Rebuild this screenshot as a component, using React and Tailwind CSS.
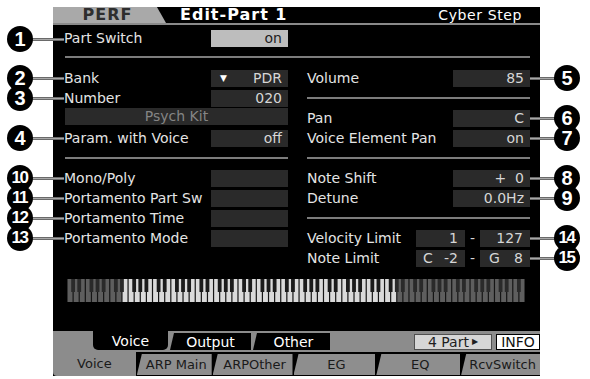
import React from "react";

const LBL = "text-[14px] leading-[17px] text-[#e4e4e4] whitespace-nowrap";
const BOXB = "h-[17px] bg-[#2a2a2a] text-[14px] leading-[17px] whitespace-nowrap";
const BOX = `${BOXB} text-[#d6d6d6]`;

function Row({ label, value, children }) {
  return (
    <div className="flex h-[20px] items-start justify-between">
      <span className={LBL}>{label}</span>
      {children ? children : <div className={`${BOX} w-[77px] text-right pr-[6px]`}>{value}</div>}
    </div>
  );
}

function Sep({ ml = "" }) {
  return (
    <div className="h-[20px]">
      <div className={`mt-[7px] h-[2px] bg-[#7c7c7c] ${ml}`} />
    </div>
  );
}

function Keyboard() {
  const W = 458;
  const n = 75;
  const w = W / n;
  const whites = [];
  const blacks = [];
  for (let i = 0; i < n; i++) {
    const dim = i < 9 || i >= 54;
    whites.push(
      <rect key={"w" + i} x={i * w + 0.6} y={0} width={w - 1.2} height={23} fill={dim ? "#5e5e5e" : "#dadada"} />
    );
  }
  for (let i = 0; i < n - 1; i++) {
    const p = i % 7;
    if ([0, 1, 3, 4, 5].includes(p)) {
      const dim = i < 9 || i >= 53;
      blacks.push(
        <rect key={"b" + i} x={(i + 1) * w - 1.9} y={0} width={3.8} height={13} fill={dim ? "#2a2a2a" : "#1b1b1b"} />
      );
    }
  }
  return (
    <svg width={W} height={23} viewBox={`0 0 ${W} 23`} className="block">
      <rect x="0" y="0" width={W} height="23" fill="#151515" />
      {whites}
      {blacks}
    </svg>
  );
}

function Callout({ n, y, side }) {
  const two = String(n).length > 1;
  const circle = (
    <div
      className={`absolute flex h-[26px] w-[26px] items-center justify-center rounded-full bg-black font-bold text-white font-['Liberation_Sans'] ${
        two ? "text-[17px] tracking-[-1.5px]" : "text-[20px]"
      }`}
      style={{ left: side === "l" ? 7 : 554, top: y - 13 }}
    >
      <span className={two ? "-ml-[1px]" : ""}>{n}</span>
    </div>
  );
  const line = (
    <div
      className="absolute h-[3px] border-y border-[#6a6a6a] bg-[#a8a8a8]"
      style={side === "l" ? { left: 30, width: 34, top: y - 1.5 } : { left: 530, width: 27, top: y - 1.5 }}
    />
  );
  return (
    <>
      {line}
      {circle}
    </>
  );
}

export default function App() {
  return (
    <div className="relative h-[379px] w-[590px] overflow-hidden bg-white font-['DejaVu_Sans',sans-serif]">
      <div className="ml-[53px] mt-[7px] flex h-[369px] w-[487px] flex-col bg-black">
        {/* header */}
        <div className="flex h-[16px] items-center">
          <div className="flex h-full w-[113px] items-center justify-center bg-[#a9a9a9] pr-[4px] text-[16px] font-bold leading-none tracking-[1px] text-[#2e2e2e] [clip-path:polygon(0_0,92%_0,100%_100%,0_100%)]">
            PERF
          </div>
          <div className="ml-[14px] text-[16px] font-bold leading-none tracking-[1px] text-white">Edit-Part 1</div>
          <div className="ml-auto mr-[18px] text-[14px] leading-none tracking-[0.6px] text-white">Cyber Step</div>
        </div>
        <div className="h-[2px] bg-[#8a8a8a]" />

        {/* part switch */}
        <div className="mt-[5px] w-[235px] pl-[11px]">
          <Row label="Part Switch">
            <div className="h-[17px] w-[77px] bg-[#bdbdbd] pr-[6px] text-right text-[14px] leading-[17px] text-[#1e1e1e]">on</div>
          </Row>
        </div>
        <div className="mb-[12px] ml-[12px] mr-[10px] mt-[6px] h-[2px] bg-[#7c7c7c]" />

        {/* two columns */}
        <div className="flex items-start gap-[19px] pl-[11px] pr-[10px]">
          <div className="flex w-[224px] flex-col">
            <Row label="Bank">
              <div className={`${BOX} flex w-[77px] items-center justify-between pl-[9px] pr-[6px]`}>
                <span className="text-[9px] text-white">▼</span>
                <span>PDR</span>
              </div>
            </Row>
            <Row label="Number" value="020" />
            <div className="h-[20px] pl-[1px]">
              <div className={`${BOXB} -mt-[2px] text-center text-[#858585]`}>Psych Kit</div>
            </div>
            <Row label="Param. with Voice" value="off" />
            <Sep ml="ml-[1px]" />
            <Row label="Mono/Poly" value="" />
            <Row label="Portamento Part Sw" value="" />
            <Row label="Portamento Time" value="" />
            <Row label="Portamento Mode" value="" />
          </div>
          <div className="flex w-[223px] flex-col">
            <Row label="Volume" value="85" />
            <Sep />
            <Row label="Pan" value="C" />
            <Row label="Voice Element Pan" value="on" />
            <Sep />
            <Row label="Note Shift" value={"+\u00a0\u00a00"} />
            <Row label="Detune" value="0.0Hz" />
            <Sep />
            <Row label="Velocity Limit">
              <div className="flex items-start">
                <div className={`${BOX} w-[49px] pr-[7px] text-right`}>1</div>
                <div className="w-[15px] text-center text-[14px] leading-[17px] text-[#d6d6d6]">-</div>
                <div className={`${BOX} w-[50px] pr-[7px] text-right`}>127</div>
              </div>
            </Row>
            <Row label="Note Limit">
              <div className="flex items-start">
                <div className={`${BOX} flex w-[49px] justify-between px-[7px]`}>
                  <span>C</span>
                  <span>-2</span>
                </div>
                <div className="w-[15px] text-center text-[14px] leading-[17px] text-[#d6d6d6]">-</div>
                <div className={`${BOX} flex w-[50px] justify-between pl-[9px] pr-[7px]`}>
                  <span>G</span>
                  <span>8</span>
                </div>
              </div>
            </Row>
          </div>
        </div>

        {/* keyboard */}
        <div className="ml-[14px] mt-[9px]">
          <Keyboard />
        </div>

        {/* upper tabs */}
        <div className="mt-[29px] flex h-[21px] bg-[#8c8c8c]">
          <div className="w-[40px]" />
          <div className="flex h-[19px] w-[75px] items-center justify-center rounded-b-[5px] bg-black text-[14px] leading-none text-white">
            Voice
          </div>
          <div className="ml-[2px] mt-[2px] flex h-[17px] w-[81px] items-center justify-center bg-black text-[14px] leading-none text-white [clip-path:polygon(4px_0,100%_0,100%_100%,0_100%)]">
            Output
          </div>
          <div className="ml-[2px] mt-[2px] flex h-[17px] w-[77px] items-center justify-center bg-black pl-[4px] text-[14px] leading-none text-white [clip-path:polygon(4px_0,100%_0,100%_100%,0_100%)]">
            Other
          </div>
          <div className="flex-1" />
          <div className="mt-[3px] flex h-[16px] w-[78px] items-center justify-center border border-[#505050] bg-[#d6d6d6] text-[14px] leading-none text-[#1e1e1e]">
            4 Part <span className="ml-[3px] text-[8px]">▶</span>
          </div>
          <div className="ml-[4px] mt-[3px] flex h-[16px] w-[44px] items-center justify-center border border-black bg-white text-[14px] leading-none text-[#111]">
            INFO
          </div>
        </div>

        {/* lower tabs */}
        <div className="flex h-[24px] bg-black">
          <div className="flex w-[83px] items-center justify-center rounded-bl-[4px] bg-[#8c8c8c] pb-[2px] text-[13px] leading-none text-[#1a1a1a]">
            Voice
          </div>
          {[
            ["ARP Main", "w-[75px]"],
            ["ARPOther", "w-[80px]"],
            ["EG", "w-[82px]"],
            ["EQ", "w-[84px]"],
            ["RcvSwitch", "w-[79px]"],
          ].map(([t, w]) => (
            <div
              key={t}
              className={`${w} ml-[1px] mt-[2px] mb-[1px] flex items-center justify-center bg-[#8e8e8e] pl-[4px] text-[13px] leading-none text-[#1a1a1a] [clip-path:polygon(5px_0,100%_0,100%_100%,0_100%)]`}
            >
              {t}
            </div>
          ))}
        </div>
      </div>

      {/* callouts */}
      <Callout n={1} y={39} side="l" />
      <Callout n={2} y={78} side="l" />
      <Callout n={3} y={98} side="l" />
      <Callout n={4} y={138} side="l" />
      <Callout n={10} y={178} side="l" />
      <Callout n={11} y={198} side="l" />
      <Callout n={12} y={218} side="l" />
      <Callout n={13} y={238} side="l" />
      <Callout n={5} y={78} side="r" />
      <Callout n={6} y={118} side="r" />
      <Callout n={7} y={138} side="r" />
      <Callout n={8} y={178} side="r" />
      <Callout n={9} y={198} side="r" />
      <Callout n={14} y={238} side="r" />
      <Callout n={15} y={258} side="r" />
    </div>
  );
}
